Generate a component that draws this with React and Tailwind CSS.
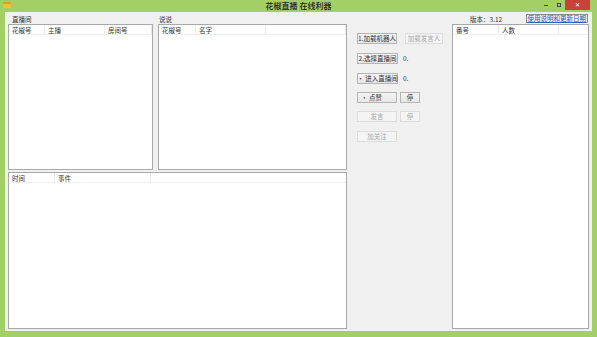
import React from 'react';

const font = { fontFamily: '"Noto Sans CJK SC", "Noto Sans", sans-serif' };

// 列表头
const ListView = ({ columns, className = '' }) => (
  <div className={`bg-white border border-[#a8a8a8] flex flex-col ${className}`}>
    <div className="h-[10px] flex border-b border-[#f0f0f0]">
      {columns.map((c, i) => (
        <div
          key={i}
          className="h-full border-r border-[#ebebeb] pl-[3px] text-[6.5px] leading-[10px] text-[#333] whitespace-nowrap overflow-hidden"
          style={{ width: c.w }}
        >
          {c.label}
        </div>
      ))}
    </div>
  </div>
);

const Btn = ({ children, disabled, className = '', align = 'center' }) => (
  <div
    className={`h-[11px] border text-[6.5px] leading-[9px] flex items-center whitespace-nowrap ${
      align === 'left' ? 'justify-start pl-[3px]' : 'justify-center'
    } ${
      disabled
        ? 'border-[#dcdcdc] bg-[#f4f4f4] text-[#a8a8a8]'
        : 'border-[#b4b4b4] bg-gradient-to-b from-[#f4f4f4] to-[#e6e6e6] text-[#333]'
    } ${className}`}
  >
    {children}
  </div>
);

export default function App() {
  return (
    <div className="w-[597px] h-[337px] bg-[#a2cf66] flex flex-col overflow-hidden" style={font}>
      {/* 标题栏 */}
      <div className="h-[12px] relative flex items-center justify-center">
        <div className="absolute left-[3px] top-[2px] w-[8px] h-[6px] bg-[#f1c232] rounded-[1px] border-t-[2px] border-[#e39b1b]" />
        <span className="text-[8px] leading-[12px] text-[#222] font-medium">花椒直播 在线利器</span>
        <div className="absolute right-[7px] top-0 flex items-start">
          <div className="w-[14px] h-[9px] flex items-center justify-center">
            <div className="w-[4px] h-[1px] bg-[#444] mt-[2px]" />
          </div>
          <div className="w-[12px] h-[9px] flex items-center justify-center">
            <div className="w-[4px] h-[4px] border border-[#444]" />
          </div>
          <div className="w-[25px] h-[10px] bg-[#c7433a] flex items-center justify-center text-white text-[6px] leading-[10px]">
            ✕
          </div>
        </div>
      </div>

      {/* 客户区 */}
      <div className="flex-1 mx-[5px] mb-[6px] bg-[#f0f0f0] flex pl-[3px] pr-[3px] pt-[3px] pb-[2px]">
        {/* 左侧 */}
        <div className="w-[339px] flex flex-col">
          <div className="h-[155px] flex gap-[5px]">
            <div className="w-[145px] flex flex-col">
              <div className="h-[9px] pl-[4px] text-[6.5px] leading-[9px] text-[#333]">直播间</div>
              <ListView
                className="flex-1"
                columns={[
                  { label: '花椒号', w: 36 },
                  { label: '主播', w: 60 },
                  { label: '房间号', w: 47 },
                ]}
              />
            </div>
            <div className="flex-1 flex flex-col">
              <div className="h-[9px] pl-[1px] text-[6.5px] leading-[9px] text-[#333]">说说</div>
              <ListView
                className="flex-1"
                columns={[
                  { label: '花椒号', w: 37 },
                  { label: '名字', w: 70 },
                  { label: '', w: 80 },
                ]}
              />
            </div>
          </div>
          <ListView
            className="flex-1 mt-[2px]"
            columns={[
              { label: '时间', w: 46 },
              { label: '事件', w: 96 },
            ]}
          />
        </div>

        {/* 中间按钮 */}
        <div className="w-[105px] flex flex-col pl-[10px] pt-[18px]">
          <div className="flex items-center gap-[8px]">
            <Btn className="w-[40px]">1.加载机器人</Btn>
            <Btn disabled className="w-[38px]">加载发言人</Btn>
          </div>
          <div className="flex items-center gap-[5px] mt-[9px]">
            <Btn className="w-[41px]">2.选择直播间</Btn>
            <span className="text-[6.5px] text-[#333]">0.</span>
          </div>
          <div className="flex items-center gap-[5px] mt-[9px]">
            <Btn className="w-[41px]">• 进入直播间</Btn>
            <span className="text-[6.5px] text-[#333]">0.</span>
          </div>
          <div className="flex items-center gap-[3px] mt-[8px]">
            <Btn className="w-[40px]" align="left">• 点赞</Btn>
            <Btn className="w-[20px]">停</Btn>
          </div>
          <div className="flex items-center gap-[3px] mt-[8px]">
            <Btn disabled className="w-[40px]">发言</Btn>
            <Btn disabled className="w-[20px]">停</Btn>
          </div>
          <div className="flex items-center mt-[9px]">
            <Btn disabled className="w-[40px]">加关注</Btn>
          </div>
        </div>

        {/* 右侧 */}
        <div className="flex-1 flex flex-col">
          <div className="h-[9px] flex items-center relative">
            <span className="ml-[18px] text-[6.5px] leading-[9px] text-[#333]">版本：3.12</span>
            <span className="absolute right-[1px] top-[-1px] h-[9px] px-[1px] border border-[#8a8a8a] text-[6.5px] leading-[7px] text-[#2a5bbf] underline whitespace-nowrap">
              使用说明和更新日期
            </span>
          </div>
          <ListView
            className="flex-1"
            columns={[
              { label: '番号', w: 46 },
              { label: '人数', w: 60 },
            ]}
          />
        </div>
      </div>
    </div>
  );
}
